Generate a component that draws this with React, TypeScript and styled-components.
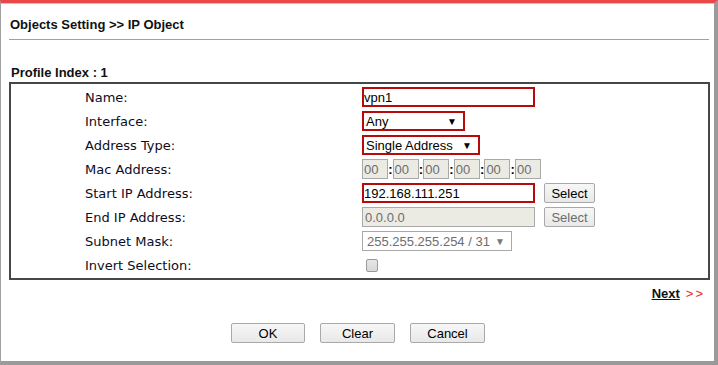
import React from 'react';
import styled, { createGlobalStyle } from 'styled-components';

const Global = createGlobalStyle`
  html, body {
    margin: 0;
    padding: 0;
    background: #fff;
  }
  body {
    font-family: Arial, "Liberation Sans", sans-serif;
  }
`;

const Page = styled.div`
  box-sizing: border-box;
  width: 718px;
  height: 365px;
  display: flex;
  flex-direction: column;
  background: #fff;
  border-top: 3px solid #e84848;
  border-left: 1px solid #a0a0a0;
  border-right: 4px solid #9a9a9a;
  border-bottom: 4px solid #9a9a9a;
  box-shadow: inset 0 1px 0 #f6b4b4;
  padding: 0 0 0 8px;
`;

const Title = styled.div`
  box-sizing: border-box;
  height: 37px;
  padding: 14px 0 0 1px;
  margin-right: 5px;
  font-size: 13px;
  font-weight: 700;
  color: #111;
  border-bottom: 1px solid #a0a0a0;
`;

const ProfileIndex = styled.div`
  margin-top: 25px;
  padding-left: 2px;
  height: 17px;
  font-size: 13px;
  font-weight: 700;
  color: #111;
`;

const Box = styled.div`
  box-sizing: border-box;
  width: 701px;
  height: 198px;
  border: 2px solid #474747;
  padding: 1px 0 1px 74px;
  display: grid;
  grid-template-columns: 277px 1fr;
  grid-auto-rows: 24px;
`;

const Label = styled.div`
  display: flex;
  align-items: center;
  font-family: "DejaVu Sans", Verdana, sans-serif;
  font-size: 13px;
  color: #0d0d1f;
`;

const Field = styled.div`
  display: flex;
  align-items: center;
  gap: 9px;
`;

const TextInput = styled.input<{ $w: number; $red?: boolean; $off?: boolean }>`
  box-sizing: border-box;
  width: ${(p) => p.$w}px;
  height: 20px;
  margin: 0;
  padding: 0 0 0 ${(p) => (p.$red ? 0 : 2)}px;
  font-family: Arial, "Liberation Sans", sans-serif;
  font-size: 13px;
  color: ${(p) => (p.$off ? '#6d6d6d' : '#000')};
  background: ${(p) => (p.$off ? '#ebebe4' : '#fff')};
  border: ${(p) => (p.$red ? '2px solid #b50b0b' : '1px solid #a9a9a9')};
  outline: none;
`;

const FakeSelect = styled.div<{ $w: number; $red?: boolean; $off?: boolean }>`
  box-sizing: border-box;
  width: ${(p) => p.$w}px;
  height: 20px;
  display: flex;
  align-items: center;
  justify-content: space-between;
  padding: 0 ${(p) => (p.$off ? 6 : 6)}px 0 ${(p) => (p.$red ? 2 : 4)}px;
  font-size: 13px;
  color: ${(p) => (p.$off ? '#6d6d6d' : '#000')};
  background: #fff;
  border: ${(p) => (p.$red ? '2px solid #b50b0b' : '1px solid #a9a9a9')};
`;

const Arrow = styled.span<{ $off?: boolean }>`
  font-size: 10px;
  color: ${(p) => (p.$off ? '#777' : '#000')};
`;

const MacRow = styled.div`
  display: flex;
  align-items: center;
`;

const MacBox = styled.input`
  box-sizing: border-box;
  width: 26px;
  height: 20px;
  margin: 0;
  padding: 0 0 0 1px;
  font-family: Arial, "Liberation Sans", sans-serif;
  font-size: 13px;
  color: #6d6d6d;
  background: #ebebe4;
  border: 1px solid #a9a9a9;
  outline: none;
`;

const Colon = styled.span`
  width: 4.6px;
  text-align: center;
  font-size: 13px;
  font-weight: 700;
  color: #000;
`;

const Btn = styled.button<{ $w: number; $off?: boolean }>`
  box-sizing: border-box;
  width: ${(p) => p.$w}px;
  height: 20px;
  margin: 0;
  padding: 0;
  font-family: Arial, "Liberation Sans", sans-serif;
  font-size: 13px;
  color: ${(p) => (p.$off ? '#6d6d6d' : '#000')};
  background: linear-gradient(#f7f7f7, #e8e8e8);
  border: 1px solid #a9a9a9;
  border-radius: 2px;
`;

const Check = styled.span`
  box-sizing: border-box;
  width: 12px;
  height: 13px;
  margin-left: 4px;
  border: 1px solid #9a9a9a;
  border-radius: 2px;
  background: linear-gradient(#e6e6e6, #d8d8d8);
`;

const NextRow = styled.div`
  display: flex;
  justify-content: flex-end;
  align-items: center;
  gap: 6px;
  height: 26px;
  padding: 1px 9px 0 0;
  box-sizing: border-box;
`;

const NextLink = styled.a`
  font-size: 13px;
  font-weight: 700;
  color: #111;
  text-decoration: underline;
`;

const Arrows = styled.span`
  font-size: 13px;
  color: #ee1c1c;
  letter-spacing: 2px;
`;

const Actions = styled.div`
  display: flex;
  justify-content: center;
  gap: 15px;
  margin-top: 17px;
  padding-right: 7px;
`;

const macs = ['00', '00', '00', '00', '00', '00'];

export default function App() {
  return (
    <>
      <Global />
      <Page>
        <Title>Objects Setting &gt;&gt; IP Object</Title>
        <ProfileIndex>Profile Index : 1</ProfileIndex>
        <Box>
          <Label>Name:</Label>
          <Field>
            <TextInput $w={173} $red readOnly value="vpn1" />
          </Field>

          <Label>Interface:</Label>
          <Field>
            <FakeSelect $w={103} $red>
              <span>Any</span>
              <Arrow>▼</Arrow>
            </FakeSelect>
          </Field>

          <Label>Address Type:</Label>
          <Field>
            <FakeSelect $w={118} $red>
              <span>Single Address</span>
              <Arrow>▼</Arrow>
            </FakeSelect>
          </Field>

          <Label>Mac Address:</Label>
          <Field>
            <MacRow>
              {macs.map((m, i) => (
                <React.Fragment key={i}>
                  {i > 0 && <Colon>:</Colon>}
                  <MacBox readOnly disabled value={m} />
                </React.Fragment>
              ))}
            </MacRow>
          </Field>

          <Label>Start IP Address:</Label>
          <Field>
            <TextInput $w={173} $red readOnly value="192.168.111.251" />
            <Btn $w={51}>Select</Btn>
          </Field>

          <Label>End IP Address:</Label>
          <Field>
            <TextInput $w={173} $off readOnly disabled value="0.0.0.0" />
            <Btn $w={51} $off disabled>
              Select
            </Btn>
          </Field>

          <Label>Subnet Mask:</Label>
          <Field>
            <FakeSelect $w={150} $off>
              <span>255.255.255.254 / 31</span>
              <Arrow $off>▼</Arrow>
            </FakeSelect>
          </Field>

          <Label>Invert Selection:</Label>
          <Field>
            <Check />
          </Field>
        </Box>
        <NextRow>
          <NextLink>Next</NextLink>
          <Arrows>&gt;&gt;</Arrows>
        </NextRow>
        <Actions>
          <Btn $w={74}>OK</Btn>
          <Btn $w={75}>Clear</Btn>
          <Btn $w={75}>Cancel</Btn>
        </Actions>
      </Page>
    </>
  );
}
